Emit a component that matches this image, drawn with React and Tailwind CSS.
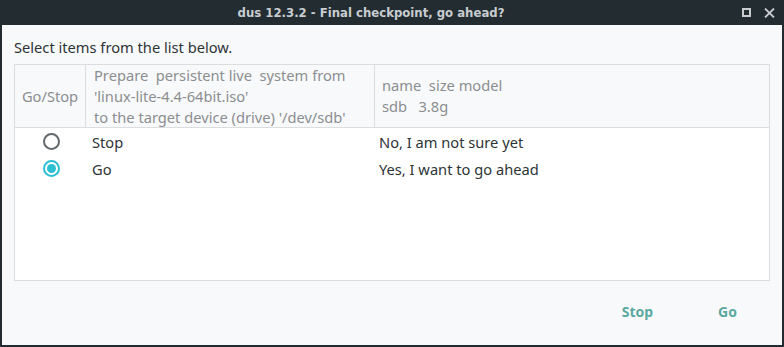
import { useState } from "react";

const rows = [
  { value: "stop", label: "Stop", desc: "No, I am not sure yet" },
  { value: "go", label: "Go", desc: "Yes, I want to go ahead" },
];

function Radio({ checked }) {
  if (checked) {
    return (
      <span className="flex h-[17px] w-[17px] items-center justify-center rounded-full border-2 border-[#2bbfd4] bg-white">
        <span className="h-[9px] w-[9px] rounded-full bg-[#2bbfd4]" />
      </span>
    );
  }
  return <span className="block h-[17px] w-[17px] rounded-full border-2 border-[#62686c] bg-white" />;
}

export default function App() {
  const [choice, setChoice] = useState("go");

  return (
    <div className="flex h-[347px] w-[784px] flex-col bg-[#222c31] font-['Noto_Sans',sans-serif]">
      {/* title bar */}
      <div className="flex h-[25px] items-center">
        <div className="flex-1 text-center font-['DejaVu_Sans_Condensed','DejaVu_Sans',sans-serif] text-[13px] font-bold text-[#c9cdd0]">
          dus 12.3.2 - Final checkpoint, go ahead?
        </div>
        <div className="flex items-center gap-[13px] pr-[9px]">
          <span className="block h-[9px] w-[9px] border-2 border-[#c9cdd0]" />
          <svg width="11" height="10" viewBox="0 0 11 10" className="text-[#c9cdd0]">
            <path d="M1 0.5 L10 9.5 M10 0.5 L1 9.5" stroke="currentColor" strokeWidth="1.8" />
          </svg>
        </div>
      </div>

      {/* body */}
      <div className="mx-[2px] mb-[2px] flex flex-1 flex-col bg-[#f8f9fb] px-3">
        <p className="mt-[11px] mb-[6px] h-[22px] text-[14.67px] leading-[22px] text-[#2e3436]">
          Select items from the list below.
        </p>

        <div className="flex h-[217px] flex-col border border-[#dcdddf] bg-white">
          <div className="flex h-[63px] border-b border-[#dcdddf] bg-[#f8f9fb] text-[14.67px] leading-[21px] text-[#8b8e90]">
            <div className="flex w-[71px] items-center justify-center border-r border-[#dcdddf]">Go/Stop</div>
            <div className="flex w-[289px] flex-col justify-center whitespace-pre border-r border-[#dcdddf] pl-[8px]">
              <span>Prepare  persistent live  system from</span>
              <span>'linux-lite-4.4-64bit.iso'</span>
              <span>to the target device (drive) '/dev/sdb'</span>
            </div>
            <div className="flex flex-1 flex-col justify-center whitespace-pre pl-[7px]">
              <span>name  size model</span>
              <span>sdb   3.8g</span>
            </div>
          </div>

          <div className="flex flex-col text-[14.67px] text-[#2e3436]">
            {rows.map((r) => (
              <div
                key={r.value}
                className="flex h-[27px] cursor-pointer items-center"
                onClick={() => setChoice(r.value)}
              >
                <div className="flex w-[71px] justify-center pl-[2px]">
                  <Radio checked={choice === r.value} />
                </div>
                <div className="w-[289px] pl-[6px]">{r.label}</div>
                <div className="flex-1 pl-[4px]">{r.desc}</div>
              </div>
            ))}
          </div>
        </div>

        <div className="flex flex-1 items-center justify-end gap-[65px] pb-[4px] pr-[33px] text-[14px] font-bold text-[#5ba9a0]">
          <button type="button" onClick={() => setChoice("stop")}>Stop</button>
          <button type="button" onClick={() => setChoice("go")}>Go</button>
        </div>
      </div>
    </div>
  );
}
